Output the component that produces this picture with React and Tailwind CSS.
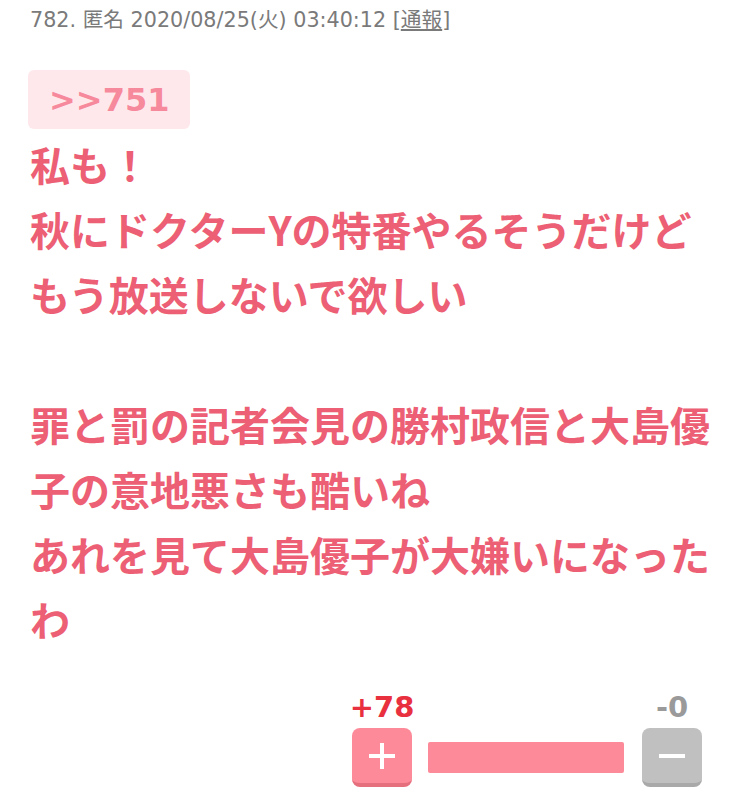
import React from 'react';

const PostPage = () => {
  // body lines as shown in the post
  const lines = [
    '私も！',
    '秋にドクターYの特番やるそうだけど',
    'もう放送しないで欲しい',
    '',
    '罪と罰の記者会見の勝村政信と大島優',
    '子の意地悪さも酷いね',
    'あれを見て大島優子が大嫌いになった',
    'わ',
  ];

  return (
    <div className="min-h-[794px] bg-white px-[30px] font-['DejaVu_Sans','Noto_Sans_CJK_JP',sans-serif]">
      {/* Post header */}
      <div className="h-[40px] leading-[40px] text-[20.7px] text-[#7a7a7a] whitespace-nowrap">
        782. 匿名 2020/08/25(火) 03:40:12 [<span className="underline underline-offset-2">通報</span>]
      </div>

      {/* Reply anchor */}
      <div className="mt-[30px] -ml-[2px] inline-flex h-[59px] items-center rounded-[6px] bg-[#ffe8ec] px-[21px]">
        <span className="text-[32px] font-bold text-[#f6899b] leading-none">&gt;&gt;751</span>
      </div>

      {/* Body */}
      <div className="mt-[3px] text-[40px] leading-[65px] font-bold text-[#ec5f74] font-['Noto_Sans_CJK_JP',sans-serif]">
        {lines.map((line, i) => (
          <div key={i} className="h-[65px] whitespace-nowrap">{line}</div>
        ))}
      </div>

      {/* Votes */}
      <div className="mt-[40px] flex justify-end pr-[18px]">
        <div className="flex w-[60px] flex-col items-center">
          <span className="h-[30px] leading-[30px] text-[29px] font-bold text-[#e8303f] whitespace-nowrap">+78</span>
          <button className="mt-[6px] flex h-[59px] w-[60px] items-center justify-center rounded-[8px] border-b-[4px] border-[#e66f7e] bg-[#fd8a98]">
            <svg width="30" height="30" viewBox="0 0 30 30">
              <path d="M15 2v26M2 15h26" stroke="white" strokeWidth="4" />
            </svg>
          </button>
        </div>

        <div className="ml-[16px] mt-[50px] h-[31px] w-[196px] rounded-[2px] bg-[#fd8a98]" />

        <div className="ml-[18px] flex w-[60px] flex-col items-center">
          <span className="h-[30px] leading-[30px] text-[29px] font-bold text-[#9a9a9a]">-0</span>
          <button className="mt-[6px] flex h-[59px] w-[60px] items-center justify-center rounded-[8px] border-b-[4px] border-[#a9a9a9] bg-[#c0c0c0]">
            <svg width="30" height="30" viewBox="0 0 30 30">
              <path d="M2 15h26" stroke="white" strokeWidth="4" />
            </svg>
          </button>
        </div>
      </div>
    </div>
  );
};

export default PostPage;
